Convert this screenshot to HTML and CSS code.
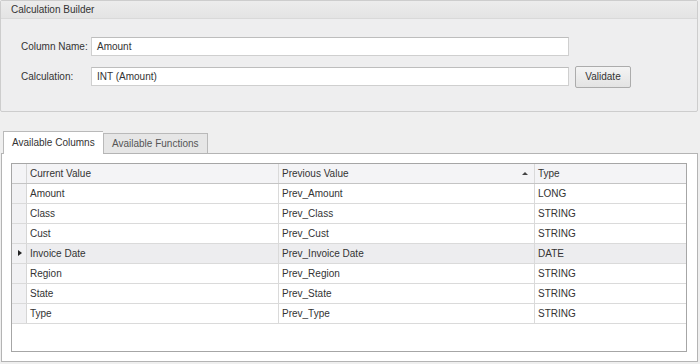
FILE: index.html
```html
<!DOCTYPE html>
<html>
<head>
<meta charset="utf-8">
<link rel="stylesheet" href="styles.css">
</head>
<body>
<div class="group">
  <div class="group-head">Calculation Builder</div>
  <div class="group-body">
    <div class="form-row">
      <span class="label">Column Name:</span>
      <div class="input">Amount</div>
    </div>
    <div class="form-row">
      <span class="label">Calculation:</span>
      <div class="input">INT (Amount)</div>
      <button class="btn">Validate</button>
    </div>
  </div>
</div>

<div class="tabs">
  <div class="tab active">Available Columns</div>
  <div class="tab">Available Functions</div>
</div>
<div class="page">
  <div class="grid">
    <div class="row head">
      <div class="ind"></div>
      <div class="c1">Current Value</div>
      <div class="c2">Previous Value<span class="sort"></span></div>
      <div class="c3">Type</div>
    </div>
    <div class="row"><div class="ind"></div><div class="c1">Amount</div><div class="c2">Prev_Amount</div><div class="c3">LONG</div></div>
    <div class="row"><div class="ind"></div><div class="c1">Class</div><div class="c2">Prev_Class</div><div class="c3">STRING</div></div>
    <div class="row"><div class="ind"></div><div class="c1">Cust</div><div class="c2">Prev_Cust</div><div class="c3">STRING</div></div>
    <div class="row sel"><div class="ind"><span class="arrow"></span></div><div class="c1">Invoice Date</div><div class="c2">Prev_Invoice Date</div><div class="c3">DATE</div></div>
    <div class="row"><div class="ind"></div><div class="c1">Region</div><div class="c2">Prev_Region</div><div class="c3">STRING</div></div>
    <div class="row"><div class="ind"></div><div class="c1">State</div><div class="c2">Prev_State</div><div class="c3">STRING</div></div>
    <div class="row"><div class="ind"></div><div class="c1">Type</div><div class="c2">Prev_Type</div><div class="c3">STRING</div></div>
  </div>
</div>
</body>
</html>
```
FILE: styles.css
```css
* { box-sizing: border-box; }
html, body { margin: 0; padding: 0; }
body {
  width: 700px;
  height: 364px;
  background: #efefef;
  font-family: "Liberation Sans", Arial, sans-serif;
  font-size: 10px;
  color: #333;
  overflow: hidden;
  white-space: nowrap;
}
.group {
  width: 698px;
  height: 112px;
  border: 1px solid #cdcdcd;
  border-radius: 2px;
  background: #eeeeef;
}
.group-head {
  height: 18px;
  line-height: 17px;
  padding-left: 10px;
  background: linear-gradient(#ececec, #e4e4e4);
  border-bottom: 1px solid #d9d9d9;
}
.group-body {
  padding: 18px 0 0 20px;
  display: flex;
  flex-direction: column;
  gap: 11px;
}
.form-row {
  display: flex;
  align-items: center;
  height: 19px;
}
.label {
  width: 70px;
  flex-shrink: 0;
}
.input {
  width: 478px;
  flex-shrink: 0;
  height: 19px;
  line-height: 17px;
  padding-left: 5px;
  background: #fff;
  border: 1px solid #cfcfcf;
  border-top-color: #bdbdbd;
}
.btn {
  margin-left: 6px;
  width: 56px;
  height: 22px;
  flex-shrink: 0;
  font: inherit;
  color: #333;
  background: linear-gradient(#f4f4f4, #e3e3e3);
  border: 1px solid #acacac;
  border-radius: 2px;
  padding: 0;
}
.tabs {
  display: flex;
  align-items: flex-end;
  margin-top: 18px;
  padding-left: 3px;
  height: 23px;
}
.tab {
  height: 20px;
  line-height: 19px;
  padding: 0 0 0 8px;
  border: 1px solid #b9b9b9;
  border-bottom: none;
  background: #e6e6e6;
  color: #555;
  width: 105px;
  flex-shrink: 0;
}
.tab.active {
  height: 23px;
  line-height: 22px;
  width: 100px;
  background: #fff;
  color: #333;
  border-right: none;
  position: relative;
  z-index: 1;
  margin-bottom: -1px;
}
.page {
  width: 697px;
  height: 209px;
  margin-left: 1px;
  border: 1px solid #b4b4b4;
  background: #fff;
  padding: 9px;
}
.grid {
  width: 676px;
  height: 189px;
  border: 1px solid #a6a6a6;
}
.row {
  display: flex;
  height: 20px;
  line-height: 19px;
  border-bottom: 1px solid #dadada;
}
.row.head {
  background: #f4f4f6;
  border-bottom-color: #c4c4c4;
}
.row.sel { background: #ededef; }
.ind {
  width: 15px;
  flex-shrink: 0;
  background: #f1f1f3;
  border-right: 1px solid #d6d6d6;
  position: relative;
}
.row.head .ind { background: #f4f4f6; }
.c1, .c2, .c3 {
  padding-left: 3px;
  border-right: 1px solid #dadada;
  overflow: hidden;
}
.c1 { width: 252px; flex-shrink: 0; }
.c2 { width: 256px; flex-shrink: 0; position: relative; }
.c3 { flex: 1; border-right: none; }
.sort {
  position: absolute;
  right: 6px;
  top: 8px;
  width: 0; height: 0;
  border-left: 3px solid transparent;
  border-right: 3px solid transparent;
  border-bottom: 3px solid #444;
}
.arrow {
  position: absolute;
  left: 6px;
  top: 6px;
  width: 0; height: 0;
  border-top: 3.5px solid transparent;
  border-bottom: 3.5px solid transparent;
  border-left: 4px solid #222;
}
```
